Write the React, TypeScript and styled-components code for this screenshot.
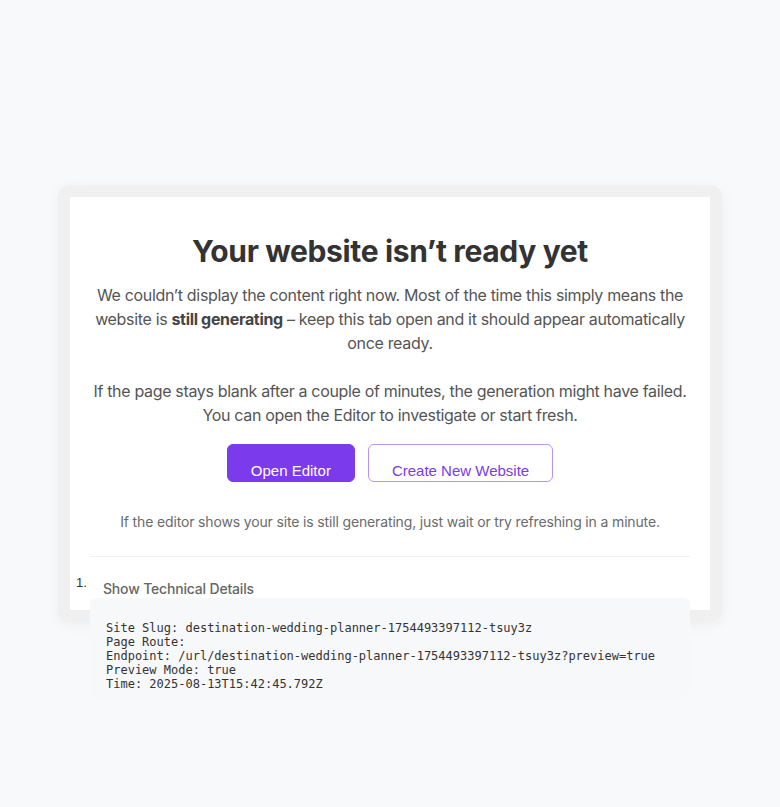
import React from "react";
import styled, { createGlobalStyle } from "styled-components";

const GlobalStyle = createGlobalStyle`
  html, body {
    margin: 0;
    padding: 0;
    background: #f8f9fb;
    font-family: Inter, "Noto Sans", sans-serif;
  }
  * { box-sizing: border-box; }
`;

const Page = styled.div`
  min-height: 100vh;
  display: flex;
  align-items: center;
  justify-content: center;
`;

const Frame = styled.div`
  padding: 12px;
  border-radius: 12px;
  background: #f0f0f0;
  box-shadow: 0 3px 14px rgba(0, 0, 0, 0.05);
`;

const Card = styled.div`
  width: 640px;
  height: 413px;
  padding: 36px 20px 20px;
  background: #ffffff;
  text-align: center;
`;

const Title = styled.h1`
  margin: 0 0 14px;
  font-size: 30px;
  line-height: 36px;
  font-weight: 700;
  color: #333333;
  letter-spacing: -0.35px;
`;

const Text = styled.p<{ $gap: number }>`
  margin: 0 0 ${(p) => p.$gap}px;
  font-size: 16px;
  line-height: 24px;
  color: #555555;
  letter-spacing: -0.33px;
  strong { font-weight: 700; color: #444444; }
`;

const Actions = styled.div`
  display: flex;
  justify-content: center;
  gap: 13px;
`;

const Button = styled.button<{ $variant: "solid" | "outline" }>`
  height: 38px;
  padding: 17px 23px 3px;
  border-radius: 6px;
  font-family: "Liberation Sans", Arial, sans-serif;
  font-size: 15px;
  line-height: 18px;
  cursor: pointer;
  background: ${(p) => (p.$variant === "solid" ? "#7c3aed" : "#ffffff")};
  color: ${(p) => (p.$variant === "solid" ? "#ffffff" : "#7c3aed")};
  border: 1px solid ${(p) => (p.$variant === "solid" ? "#7c3aed" : "#b794f6")};
`;

const Note = styled.p`
  margin: 30px 0 0;
  font-size: 14px;
  line-height: 20px;
  color: #6b6b6b;
  letter-spacing: -0.15px;
`;

const Divider = styled.hr`
  margin: 24px 0 18px;
  border: 0;
  border-top: 1px solid #f0f0f0;
`;

const TechList = styled.ol`
  list-style: none;
  margin: 0;
  padding: 0;
  text-align: left;
`;

const Details = styled.details``;

const Summary = styled.summary`
  display: flex;
  align-items: flex-start;
  margin-left: -14px;
  cursor: pointer;
`;

const Marker = styled.span`
  width: 14px;
  font-family: "Liberation Sans", Arial, sans-serif;
  font-size: 13px;
  line-height: 16px;
  color: #333333;
`;

const SummaryLabel = styled.span`
  padding: 5px 0 0 13px;
  font-size: 14px;
  line-height: 18px;
  font-weight: 500;
  color: #666666;
  letter-spacing: -0.18px;
`;

const Pre = styled.pre`
  margin: 0;
  padding: 24px 16px 6px;
  border-radius: 6px;
  background: #f7f8fa;
  font-family: "DejaVu Sans Mono", monospace;
  font-size: 12px;
  line-height: 13.9px;
  color: #333333;
  white-space: pre;
`;

const details = [
  "Site Slug: destination-wedding-planner-1754493397112-tsuy3z",
  "Page Route: ",
  "Endpoint: /url/destination-wedding-planner-1754493397112-tsuy3z?preview=true",
  "Preview Mode: true",
  "Time: 2025-08-13T15:42:45.792Z",
].join("\n");

export default function App() {
  return (
    <>
      <GlobalStyle />
      <Page>
        <Frame>
          <Card>
            <Title>Your website isn’t ready yet</Title>
            <Text $gap={24}>
              We couldn’t display the content right now. Most of the time this simply means the website is{" "}
              <strong>still generating</strong> – keep this tab open and it should appear automatically once ready.
            </Text>
            <Text $gap={17}>
              If the page stays blank after a couple of minutes, the generation might have failed. You can open the
              Editor to investigate or start fresh.
            </Text>
            <Actions>
              <Button $variant="solid">Open Editor</Button>
              <Button $variant="outline">Create New Website</Button>
            </Actions>
            <Note>If the editor shows your site is still generating, just wait or try refreshing in a minute.</Note>
            <Divider />
            <TechList>
              <li>
                <Details open>
                  <Summary>
                    <Marker>1.</Marker>
                    <SummaryLabel>Show Technical Details</SummaryLabel>
                  </Summary>
                  <Pre>{details}</Pre>
                </Details>
              </li>
            </TechList>
          </Card>
        </Frame>
      </Page>
    </>
  );
}
